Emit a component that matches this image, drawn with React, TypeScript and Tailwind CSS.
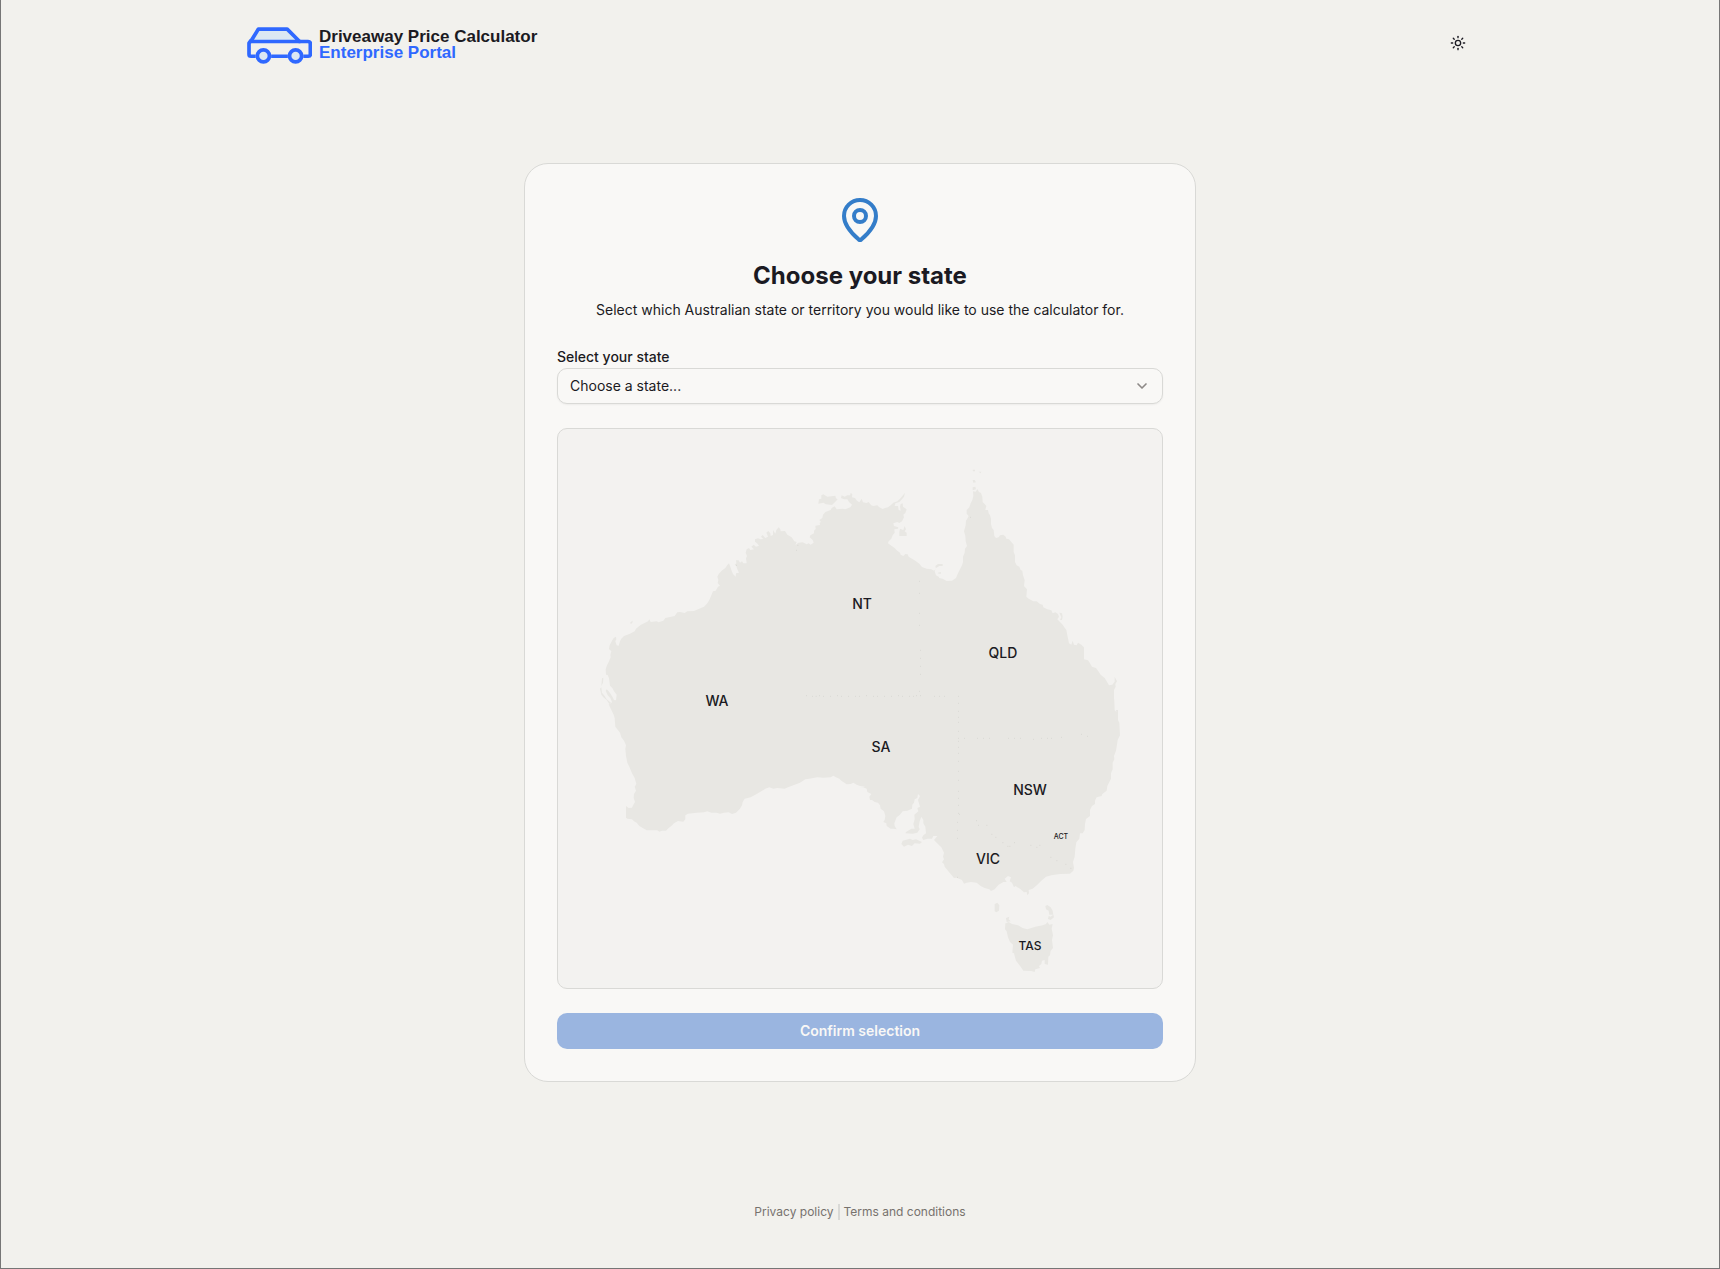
import { useState } from "react";
import { ChevronDown, MapPin, Sun } from "lucide-react";

const STATES = [
  { code: "NT", name: "Northern Territory", x: 304, y: 180, size: "text-[14px]" },
  { code: "QLD", name: "Queensland", x: 445, y: 229, size: "text-[14px]" },
  { code: "WA", name: "Western Australia", x: 159, y: 277, size: "text-[14px]" },
  { code: "SA", name: "South Australia", x: 323, y: 323, size: "text-[14px]" },
  { code: "NSW", name: "New South Wales", x: 472, y: 366, size: "text-[14px]" },
  { code: "ACT", name: "Australian Capital Territory", x: 503, y: 410, size: "text-[7px]" },
  { code: "VIC", name: "Victoria", x: 430, y: 435, size: "text-[14px]" },
  { code: "TAS", name: "Tasmania", x: 472, y: 521, size: "text-[12px]" },
];

type Point = [number, number];

// Shifts a list of "x,y" pairs from one map sheet into the shared map space.
const sheet = (dx: number, dy: number, pairs: string): Point[] =>
  pairs.split(" ").map((pair) => {
    const [x, y] = pair.split(",").map(Number);
    return [x + dx, y + dy];
  });

const NW = (pairs: string) => sheet(0, 0, pairs);
const NE = (pairs: string) => sheet(960, 0, pairs);
const SW = (pairs: string) => sheet(0, 690, pairs);
const SE = (pairs: string) => sheet(960, 810, pairs);

const ring = (points: Point[]) => "M" + points.map((p) => p.join(" ")).join("L") + "Z";
const dots = (points: Point[]) => points.map(([x, y]) => `M${x - 1} ${y}h3`).join("");

const MAINLAND = [
  ...NW(
    "225,898 221,884 213,868 206,853 212,852 216,846 211,834 203,826 197,812 200,808 206,814 212,822 218,832 222,840 228,841 230,824 222,814 217,804 210,797 207,775 203,765 198,764 197,748 201,736 206,726 212,712 211,704 214,694 207,687 209,676 216,662 221,654 228,650 229,658 226,664 230,676 236,677 240,664 244,656 252,648 270,641 278,637 284,634 288,626 297,619 303,614 318,607 324,604 328,598 332,606 350,604 356,607 370,602 376,594 390,591 404,588 412,577 420,576 434,579 442,574 462,573 474,568 492,560 502,550 508,540 514,526 519,514 527,512 534,500 540,497 533,489 535,480 532,470 536,462 545,452 556,444 562,435 567,430 571,440 575,452 579,462 587,470 588,460 597,458 592,448 589,438 584,434 589,430 588,421 596,421 600,428 606,424 610,430 620,430 618,415 621,408 617,398 620,388 627,384 631,390 642,388 634,380 641,374 648,380 657,377 651,370 645,365 645,358 654,355 662,358 670,357 663,350 668,345 676,354 684,350 682,344 679,338 685,333 691,340 692,348 699,345 699,330 706,341 709,330 716,322 721,328 722,334 735,333 742,344 755,352 763,364 770,366 766,376 775,368 788,367 800,373 806,370 812,374 821,368 818,360 809,352 811,346 822,340 822,332 827,327 826,317 840,315 839,308 843,306 838,300 847,294 849,284 856,276 872,270 875,264 884,259 890,268 908,266 916,268 931,262 936,254 927,246 922,238 912,238 903,234 905,226 914,230 922,226 930,226 932,219 937,222 936,232 945,234 951,242 958,247 965,236 969,247 980,249 986,246 990,251",
  ),
  ...NE(
    "34,256 40,258 52,256 58,262 68,267 75,264 84,262 92,256 100,248 112,244 120,236 127,228 135,218 132,230 126,238 118,246 106,250 104,258 114,258 116,270 122,272 120,260 122,252 128,250 129,260 140,268 136,279 130,284 132,292 126,304 118,309 112,306 100,310 102,318 115,322 114,326 103,328 104,338 98,346 94,356 86,364 84,370 92,376 104,384 110,391 120,398 122,404 130,408 136,402 143,403 146,410 156,416 166,422 178,431 186,441 200,446 214,448 222,452 228,446 226,438 234,432 248,432 248,438 238,438 228,444 224,454 228,466 236,470 238,474 248,476 260,483 276,482 288,474 292,464 297,454 306,436 309,426 309,410 314,398 315,386 321,378 317,364 316,348 312,334 317,316 318,302 323,294 326,288 320,281 320,270 328,262 332,250 337,240 340,228 339,214 347,215 352,207 357,216 363,219 367,230 368,246 376,254 379,258 376,270 384,270 386,280 390,286 393,296 393,312 396,324 401,330 403,348 408,354 416,352 420,346 430,344 437,350 439,356 447,358 454,366 461,374 461,396 465,406 465,426 470,436 478,440 482,450 487,452 489,466 494,480 492,498 501,508 499,530 506,536 520,544 530,544 540,552 548,554 550,562 562,568 574,571 578,580 586,577 594,582 597,590 592,598 600,606 608,614 613,622 619,630 622,646 627,670 634,674 638,662 642,674 650,676 654,668 664,674 672,682 672,718 684,721 690,730 696,740 708,744 714,752 722,764 734,774 740,784 747,796 757,794 764,785 764,770 771,784 766,792 767,800 762,810 762,834 763,844",
  ),
  ...SE(
    "764,60 769,66 768,60 774,60 774,90 778,98 780,136 773,150 771,164 768,182 762,198 763,208 758,218 758,238 753,250 753,266 742,288 740,302 727,312 725,318 710,322 705,332 705,342 696,348 690,360 690,378 678,387 675,402 674,420 668,430 660,430 658,446 649,457 646,476 644,500 639,516 642,534 640,542 630,551 600,552 574,556 558,560 544,572 532,584 518,596 506,600 507,610 502,616 500,606 492,607 480,596 466,588 462,592 456,578 449,574 453,562 444,558 434,566 440,576 430,576 416,584 404,598 393,603 388,598 374,594 362,588 350,578 333,576 320,578 312,581 306,570 290,563 282,564 272,552 262,540 254,530 252,522 246,517 252,508 249,500 252,488 244,472 236,464 222,450 232,438 220,438 216,446 202,446 190,450 186,443 190,436 198,430 196,410 190,400 190,390 184,380 179,394 176,410 179,418 172,428 158,431 136,430 138,426 154,416 164,416 160,402 164,388 163,374 175,364 172,354 180,350 174,330 180,318 174,312 172,324 164,328 162,338 157,344 156,356 142,362 128,364 120,374 110,382 103,400 104,408 110,418 100,416 92,416 80,408 79,400 70,396 74,390 76,378 72,364 62,356 60,346 54,338 44,336 36,330 30,330 28,320 34,312 22,306 20,296 10,292 0,292",
  ),
  ...SW(
    "976,410 960,408 950,404 940,398 932,402 920,403 904,392 898,386 888,382 880,377 872,382 850,383 832,382 808,386 796,388 780,398 764,404 744,412 734,416 712,414 700,416 688,412 676,416 664,424 646,434 632,442 614,446 608,456 606,466 600,476 588,488 576,492 566,487 552,488 540,491 530,488 514,488 502,484 492,487 470,488 444,491 436,496 436,508 430,515 414,513 402,520 394,528 386,534 378,542 366,542 358,545 352,541 320,541 298,528 290,518 282,514 276,508 262,506 258,503 258,468 266,474 276,473 280,464 285,456 281,444 282,432 288,422 284,410 289,402 284,384 276,370 268,350 262,338 258,318 256,296 258,286 252,272 244,262 240,248 226,230 224,206",
  ),
];

const ISLANDS = [
  SE("438,700 446,696 456,702 474,706 488,714 502,718 514,714 526,710 548,706 558,702 562,696 568,704 578,702 575,716 579,736 576,750 579,774 572,782 570,796 565,800 564,824 554,822 554,810 546,812 544,822 537,828 540,834 526,838 524,846 514,843 490,842 482,830 474,820 468,812 464,798 462,790 457,788 459,764 450,756 444,742 440,724 435,718 436,700"),
  SE("438,684 448,680 446,688 452,694 440,696"),
  SE("404,642 412,638 418,646 417,662 409,667 404,664"),
  SE("556,648 562,645 572,652 578,662 580,674 568,674 566,662 558,658"),
  SE("566,678 572,680 580,674 582,682 572,690 564,687"),
  SE("128,452 150,446 158,450 168,448 186,456 180,461 164,460 156,468 144,464 132,470 124,462"),
  NE("120,326 130,330 134,318 138,328 134,334 140,338 140,348 118,348 118,336"),
  NE("234,458 243,456 242,462 233,460"),
  NE("338,180 344,180 348,187 340,188"),
  NE("338,149 345,149 345,154 339,154"),
  NE("356,155 364,155 362,160"),
  NE("338,202 346,200 348,208 338,211"),
  NE("598,578 606,580 608,590 606,600 600,600 604,592"),
  NW("844,226 850,223 862,230 886,227 888,235 893,238 886,245 876,255 858,253 850,248 835,251 837,238 844,236"),
  NW("271,607 278,602 277,609 272,612"),
  NW("186,775 190,773 189,788 184,798"),
  NW("180,806 184,802 186,818 194,828 200,838 210,846 215,850 208,852 200,840 190,832 184,824"),
];

const BORDER_MARKS = [
  ...NW("799,827 817,829 828,829 838,827 850,829 871,829 892,827 904,829 925,829 946,829 958,829 979,827 1000,829 1012,829 773,376 769,391 589,436"),
  ...NE("73,829 94,829 115,827 127,829 148,829 160,829 169,827 181,827 223,829 238,829 253,829 295,829 178,484 178,520 178,580 178,616 181,691 181,715 181,739 181,763 178,814 295,850 295,874 295,892 331,292"),
  ...SE("295,97 295,124 295,145 295,154 295,172 295,190 295,214 295,244 295,271 295,304 295,325 295,346 295,370 298,373 292,397 292,421 292,445 313,145 352,145 370,145 388,145 445,145 463,145 481,145 520,148 544,145 562,145 574,145 604,142 664,133 682,139 349,392 355,406 380,406 395,433 407,442 428,458 443,469 449,469 463,458 512,466 530,472 539,466 572,502 590,512 617,523 632,535 292,562"),
];

const LAND_PATH = [MAINLAND, ...ISLANDS].map(ring).join("");
const BORDER_PATH = dots(BORDER_MARKS);

function CarLogo() {
  return (
    <svg viewBox="34 44 194 110" className="h-[37px] w-[65px] shrink-0" fill="none" stroke="#2f68ff" strokeWidth="11" strokeLinejoin="round" aria-hidden="true">
      <path d="M45 87 68 50H154L191 87Z" fill="#dbe8f3" />
      <path d="M60 131H46Q40 131 40 125V92L46 84M188 87H216Q223 87 223 94V125Q223 131 217 131H202M106 131H156" />
      <circle cx="83" cy="130" r="18" fill="#dbe8f3" />
      <circle cx="179" cy="130" r="18" fill="#dbe8f3" />
    </svg>
  );
}

function StateMap({ selected }: { selected: string }) {
  return (
    <svg viewBox="0 0 604 559" className="block w-full" role="img" aria-label="Map of Australian states and territories">
      <g transform="scale(0.33333) translate(-54 -27)">
        <path d={LAND_PATH} fill="#e8e7e3" />
        <path d={BORDER_PATH} stroke="#d9d8d4" strokeWidth="3" />
      </g>
      {STATES.map((s) => (
        <text
          key={s.code}
          x={s.x}
          y={s.y}
          textAnchor="middle"
          className={`${s.size} font-medium ${selected === s.code ? "fill-[#3178c6]" : "fill-[#1b1a22]"}`}
        >
          {s.code}
        </text>
      ))}
    </svg>
  );
}

export default function App() {
  const [selected, setSelected] = useState("");

  return (
    <div className="flex min-h-screen flex-col border-x border-b border-[#767676] bg-[#f2f1ed] font-['Inter',sans-serif] text-[#1b1a22]">
      <header className="mx-auto flex w-full max-w-7xl items-start justify-between px-6 pt-[25px] pb-6">
        <a href="#" className="mt-0.5 ml-[3px] flex items-center gap-[7px]">
          <CarLogo />
          <span className="flex flex-col pb-0.5 font-['Liberation_Sans',Arial,sans-serif] text-[17px] leading-4 font-bold">
            <span>Driveaway Price Calculator</span>
            <span className="text-[#2f68ff]">Enterprise Portal</span>
          </span>
        </a>
        <button type="button" aria-label="Toggle theme" className="flex size-9 items-center justify-center rounded-md">
          <Sun className="size-4" />
        </button>
      </header>

      <main className="flex flex-1 items-center justify-center px-4">
        <section className="w-full max-w-2xl rounded-3xl border border-[#d9d9d6] bg-[#f9f8f6] p-8">
          <div className="flex flex-col items-center text-center">
            <MapPin className="size-12 text-[#347dc9]" />
            <h1 className="mt-4 text-2xl font-bold">Choose your state</h1>
            <p className="mt-2 text-sm">Select which Australian state or territory you would like to use the calculator for.</p>
          </div>

          <form className="mt-6 flex flex-col gap-6" onSubmit={(e) => e.preventDefault()}>
            <div>
              <label htmlFor="state" className="block pt-0.5 text-sm leading-[22px] font-medium">
                Select your state
              </label>
              <div className="relative">
                <select
                  id="state"
                  value={selected}
                  onChange={(e) => setSelected(e.target.value)}
                  className="block h-9 w-full appearance-none rounded-[10px] border border-[#d9d9d6] bg-[#f9f8f6] px-3 text-sm shadow-xs"
                >
                  <option value="">Choose a state...</option>
                  {STATES.map((s) => (
                    <option key={s.code} value={s.code}>
                      {s.name}
                    </option>
                  ))}
                </select>
                <ChevronDown strokeWidth={2.5} className="pointer-events-none absolute top-2.5 right-[13px] size-4 text-[#8d8987]" />
              </div>
            </div>

            <div className="overflow-hidden rounded-[10px] border border-[#d9d9d6] bg-[#f3f2f0]">
              <StateMap selected={selected} />
            </div>

            <button
              type="submit"
              disabled={!selected}
              className="h-9 w-full rounded-[10px] bg-[#347dc9] text-sm font-semibold text-[#f9f8f6] disabled:bg-[#9ab5e0]"
            >
              Confirm selection
            </button>
          </form>
        </section>
      </main>

      <footer className="flex items-center justify-center py-12 text-xs text-[#77726d]">
        <a href="#">Privacy policy</a>
        <span className="mx-1 h-4 w-0.5 bg-[#d9d9d6]" />
        <a href="#">Terms and conditions</a>
      </footer>
    </div>
  );
}
